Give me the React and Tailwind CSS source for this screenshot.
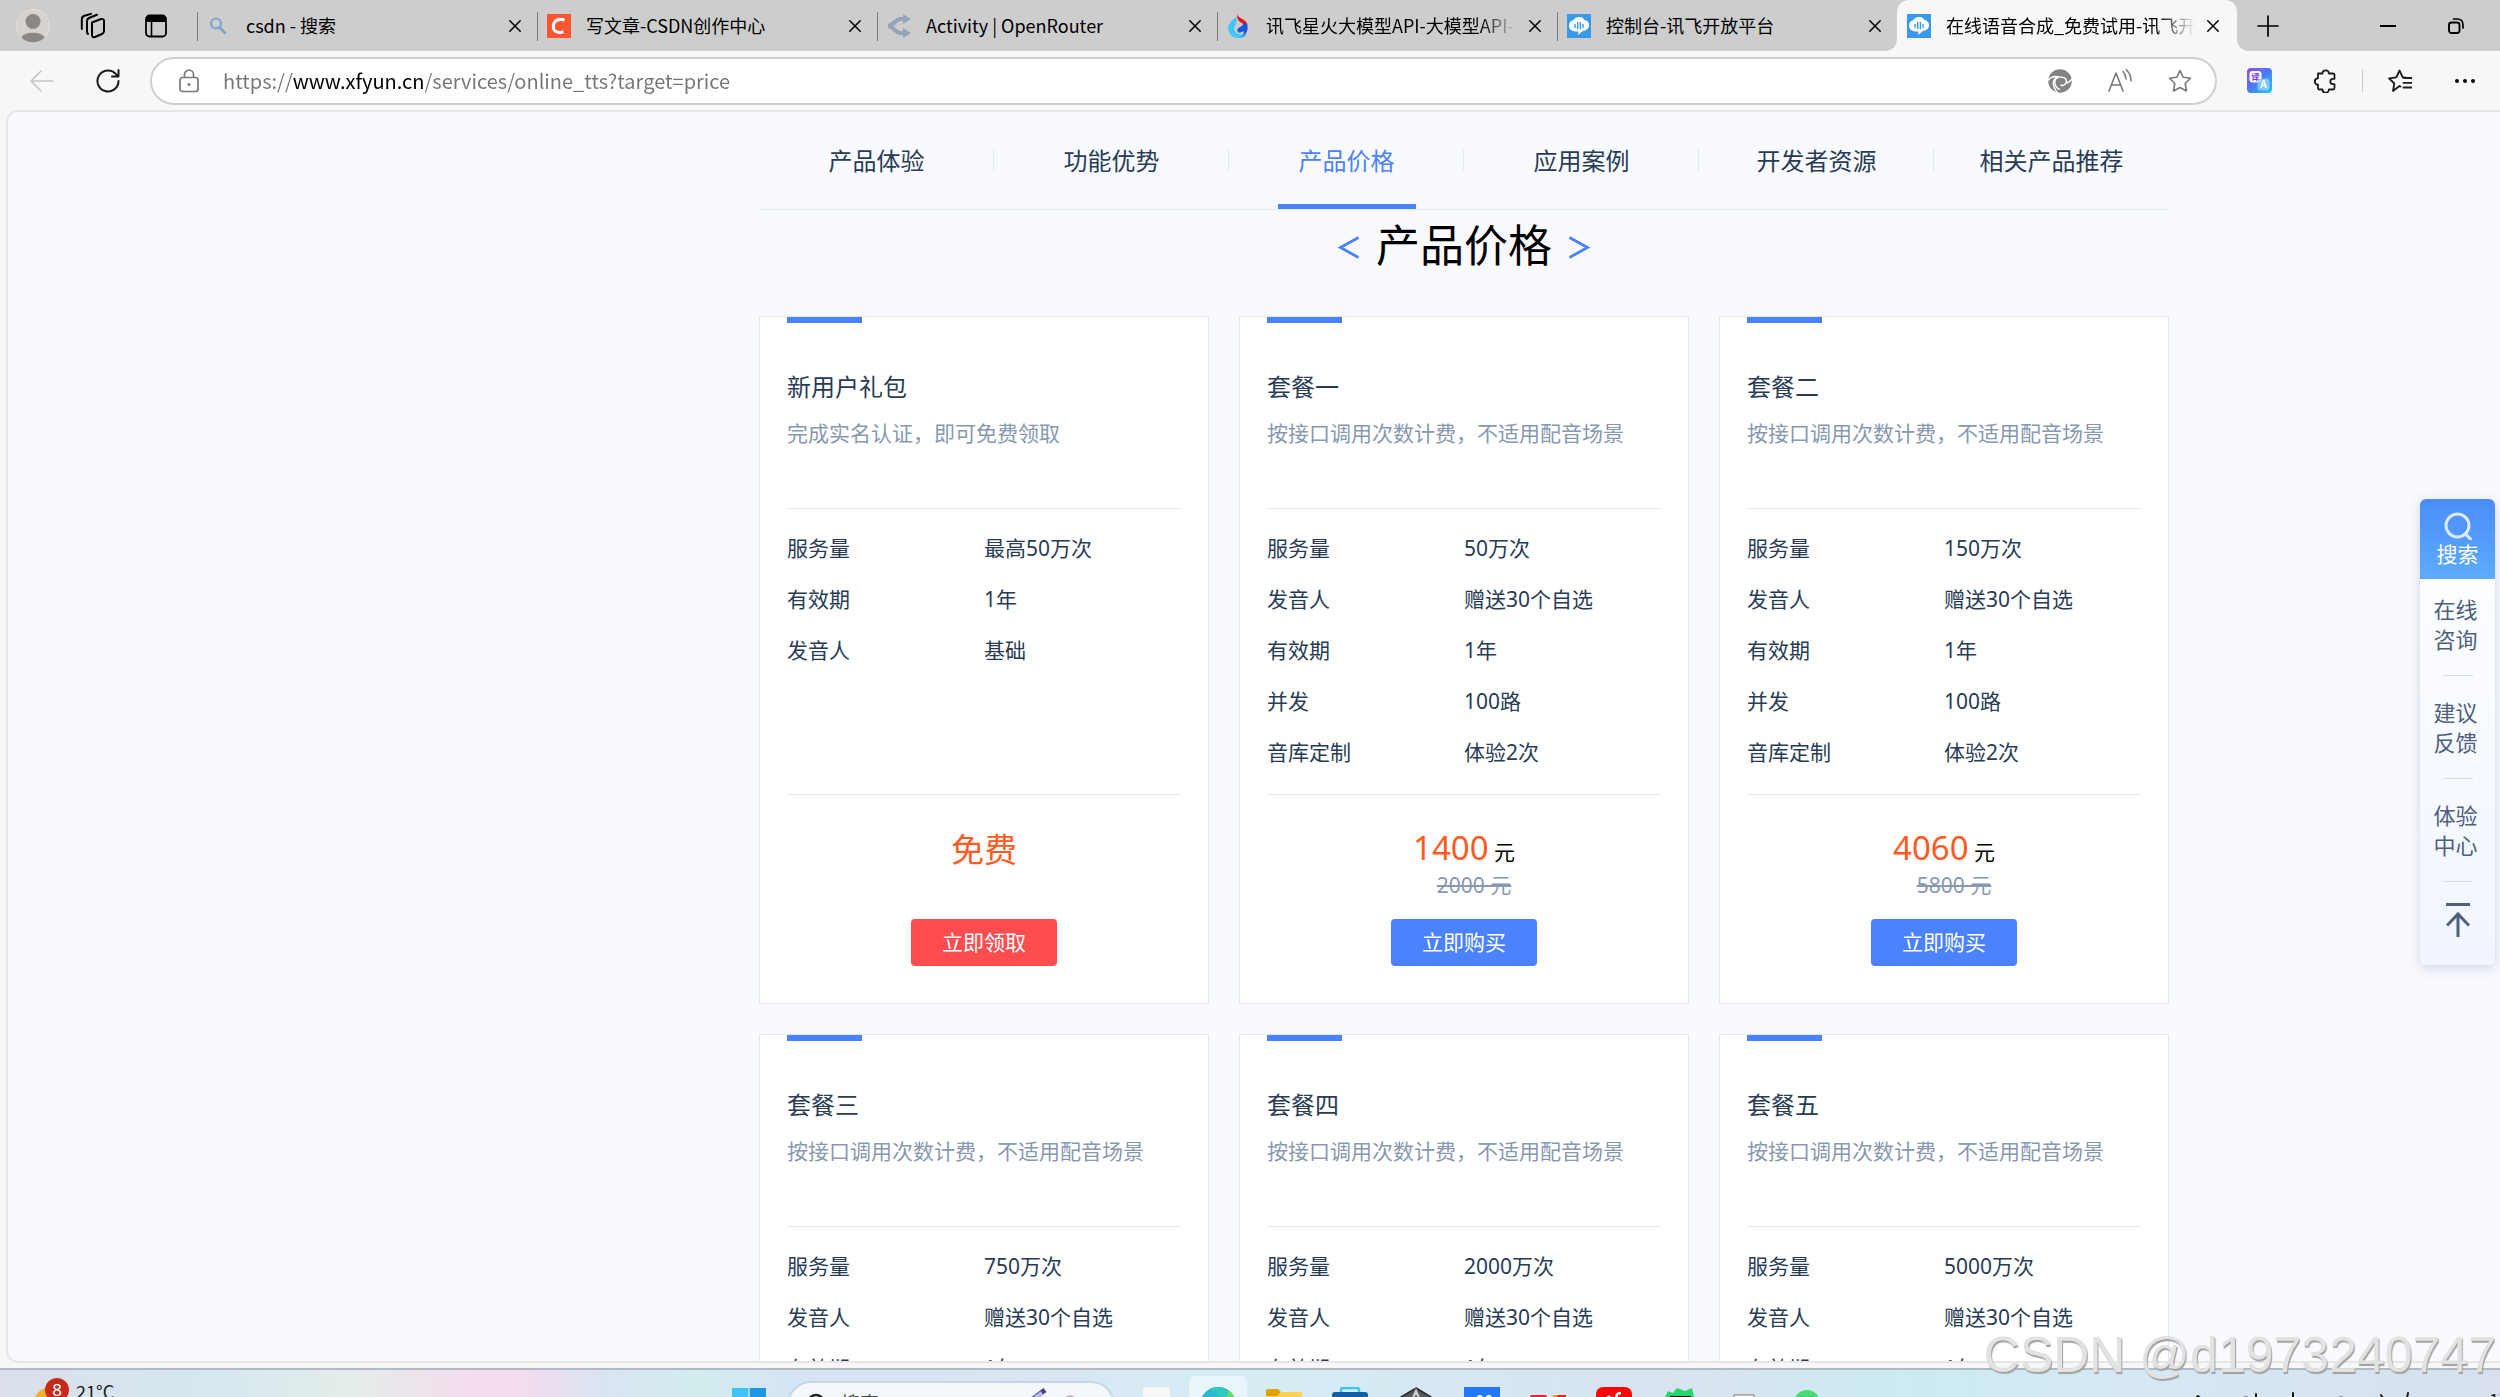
import React from "react";

const UI = "font-['Noto_Sans_CJK_SC',sans-serif]";

const s = (w) => ({ fill: "none", stroke: "currentColor", strokeWidth: w, strokeLinecap: "round", strokeLinejoin: "round" });

const SearchFav = () => (
  <svg className="size-6 text-[#7ba7cf]" viewBox="0 0 24 24"><circle cx="9" cy="9.500" r="5" {...s(2.2)} /><path d="M12.700 13.500 18 19" {...s(2.6)} /></svg>
);
const CsdnFav = () => (
  <svg className="size-6" viewBox="0 0 24 24"><rect width="24" height="24" fill="#fc5531" /><path d="M17.500 6.200C12 4 6.800 6.500 6.300 12c-.4 5 4 7.800 10.200 5.800" fill="none" stroke="#fff" strokeWidth="3" /></svg>
);
const RouterFav = () => (
  <svg className="size-6" viewBox="0 0 24 24"><path d="M0 12c5 0 7-6 12-7h6M0 12c5 0 7 6 12 7h6" transform="translate(1 0)" fill="none" stroke="#94a3b8" strokeWidth="4" /><path d="M16 0l8 5-8 5zM16 14l8 5-8 5z" fill="#94a3b8" /></svg>
);
const SparkFav = () => (
  <svg className="size-6" viewBox="0 0 24 24"><path d="M9 3C5 6 1 10 1 15a10 9.500 0 0 0 10 9c4 0 7-1 9-4-3 1-7 1-10-1-4-3-3-6-1-9 1-2 1-4 0-7z" fill="#43c6f7" /><path d="M10 0c1 5 11 5 10.500 12-2-2-6-2-9-5.500C10 4 10 2 10 0z" fill="#e8131b" /><path d="M20.500 12c1 7-4 11-9 12 3-1 6-3 5-7-1 1-3 2-5 1.500C9 16 11 14 13 13c2-1 3-1.500 3-4 2 0 4 1 4.500 3z" fill="#1a55dc" /></svg>
);
const XfFav = () => (
  <svg className="size-6" viewBox="0 0 24 24"><rect width="24" height="24" fill="#3898ec" /><path d="M12 3c3 0 4.500 1 5.500 3C20.500 6.500 22.500 9 22 12c-.5 3-3 4.500-6 5l-5 4 .500-3.500C7 18 2 16.500 2 12c0-3 1.500-5.500 4.500-6C7.500 4 9 3 12 3z" fill="#fff" /><path d="M8 10.500v3M10.700 8.500v6M13.400 8.500v6M16 10.500v3" {...s(1.4)} stroke="#3898ec" /></svg>
);

const tabs = [
  { t: "csdn - 搜索", I: SearchFav },
  { t: "写文章-CSDN创作中心", I: CsdnFav },
  { t: "Activity | OpenRouter", I: RouterFav },
  { t: "讯飞星火大模型API-大模型API-星火", I: SparkFav, fade: true },
  { t: "控制台-讯飞开放平台", I: XfFav },
  { t: "在线语音合成_免费试用-讯飞开放平台", I: XfFav, fade: true, active: true },
];

const Close = () => (
  <svg className="size-3" viewBox="0 0 12 12"><path d="M.8.8l10.400 10.400M11.200.8.8 11.200" {...s(1.5)} /></svg>
);

function Tab({ t, I, fade, active }) {
  return (
    <div className={"relative flex h-[51px] min-w-0 max-w-[340px] flex-1 items-center pl-[10px] " + (active ? "rounded-t-xl bg-[#f7f7f7] pr-[18px]" : "pr-4")}>
      {!active && <span className="absolute left-0 top-3 h-[29px] w-px bg-[#7c7c7c]" />}
      {active && <svg className="absolute bottom-0 -left-3 size-3" viewBox="0 0 12 12"><path d="M12 0v12H0C7 12 12 7 12 0z" fill="#f7f7f7" /></svg>}
      {active && <svg className="absolute bottom-0 -right-3 size-3" viewBox="0 0 12 12"><path d="M0 0v12h12C5 12 0 7 0 0z" fill="#f7f7f7" /></svg>}
      <I />
      <button className={"ml-[15px] mr-3 min-w-0 flex-1 overflow-hidden whitespace-nowrap pb-0.5 text-left text-[18px] leading-7 " + (fade ? "[mask-image:linear-gradient(90deg,#000_85%,transparent)]" : "")}>{t}</button>
      <button aria-label="关闭标签页"><Close /></button>
    </div>
  );
}

function TabStrip() {
  return (
    <header className="flex h-[51px] items-center bg-[#cdcdcd] text-black">
      <div className="flex w-[197px] shrink-0 items-center">
        <button aria-label="个人资料" className="ml-4">
          <svg className="size-[34px]" viewBox="0 0 34 34"><circle cx="17" cy="17" r="16.500" fill="#d6d3ce" stroke="#e2e0dc" /><circle cx="17" cy="12.500" r="7.500" fill="#8b8782" /><path d="M5.500 28.500C7 22 27 22 28.500 28.500 23 35 11 35 5.500 28.500z" fill="#8b8782" /></svg>
        </button>
        <button aria-label="工作区" className="ml-[30px]">
          <svg className="size-[26px]" viewBox="0 0 26 26"><path d="M12 9.500l9-3.500q3-.5 3 2v10q0 2-2 3l-7 3q-3 1-3-2zM7 19.500V8q0-2 2-3l8-3.200M1.800 16V6q0-2 2-3L11 .9M7 8v11q0 1 1 2" {...s(2)} /></svg>
        </button>
        <button aria-label="标签页操作菜单" className="ml-[38px]">
          <svg className="size-6" viewBox="0 0 24 24"><rect x="2" y="1.500" width="20" height="21" rx="3.500" {...s(1.8)} /><path d="M2 8V5q0-4 4-4h12q4 0 4 4v3z" fill="currentColor" /><path d="M7.500 8v14" {...s(1.6)} /></svg>
        </button>
      </div>
      {tabs.map((x) => <Tab key={x.t} {...x} />)}
      <button aria-label="新建标签页" className="ml-5">
        <svg className="size-[22px]" viewBox="0 0 22 22"><path d="M11 1v20M1 11h20" {...s(1.7)} /></svg>
      </button>
      <div className="ml-auto flex shrink-0 items-center gap-[52px] pr-9">
        <button aria-label="最小化"><svg className="size-4" viewBox="0 0 16 16"><path d="M0 8h16" stroke="currentColor" strokeWidth="2" /></svg></button>
        <button aria-label="还原"><svg className="size-4" viewBox="0 0 16 16"><rect x="1" y="4.500" width="10.500" height="10.500" rx="2.500" {...s(1.9)} /><path d="M5.500 1H9Q15 1 15 7v3" {...s(1.7)} /></svg></button>
      </div>
    </header>
  );
}

function Toolbar() {
  return (
    <div className="flex h-[59px] items-center bg-[#f7f7f7] text-[#1b1b1b]">
      <button aria-label="后退" className="ml-[30px] text-[#c6c6c6]"><svg className="size-6" viewBox="0 0 24 24"><path d="M23 12H1M11 2 1 12l10 10" {...s(1.7)} /></svg></button>
      <button aria-label="刷新" className="ml-[42px]"><svg className="size-6" viewBox="0 0 24 24"><path d="M22.500 12A10.500 10.500 0 1 1 20 5.200l2 2M22.500 1v6.500H16" {...s(2)} /></svg></button>
      <div className="ml-[30px] flex h-12 min-w-0 flex-1 items-center rounded-full border-2 border-[#cfcfcf] bg-white pr-[23px] pl-[25px] text-[#7a7a7a]">
        <svg className="size-6 shrink-0" viewBox="0 0 24 24"><rect x="3" y="8.500" width="18" height="14" rx="2.500" {...s(1.7)} /><path d="M7.500 8V5.500a4.500 4.500 0 0 1 9 0V8" {...s(1.7)} /><circle cx="12" cy="15.500" r="1.500" fill="currentColor" /></svg>
        <input aria-label="地址栏" defaultValue="https://www.xfyun.cn/services/online_tts?target=price" className="ml-[22px] min-w-0 flex-1 bg-[linear-gradient(90deg,#767676_0_69px,#000_69px_200px,#767676_200px)] bg-clip-text text-[20px] leading-8 text-transparent outline-none" />
        <div className="flex items-center gap-9">
          <button aria-label="同步"><svg className="size-6" viewBox="0 0 24 24"><circle cx="12" cy="12" r="11.800" fill="#838383" /><path d="M0 11.500c3-4 8-4.500 12-3M12 8c-4 0-6 3-5 7 1 3 3 5 5 5.500M8.500 8c-4 3-4 8-1.500 12 1 1.800 2 3 3 4M12.500 8.300c4-.8 7 2 5.500 5.700-.8 2-2.800 3-5.500 2M18 14c2 0 4-1.500 6-4" fill="none" stroke="#fff" strokeWidth="1.500" /></svg></button>
          <button aria-label="大声朗读"><svg className="size-6" viewBox="0 0 24 24"><path d="M1 22 8 4l7 18M3.500 16h9M15 2.500q3 3.500 3 7.500M18.500.8q4.500 5 4.500 11" {...s(1.6)} /></svg></button>
          <button aria-label="收藏"><svg className="size-6" viewBox="0 0 24 24"><path d="M12 1.500l3.200 6.800 7.300 1-5.300 5.200 1.300 7.500L12 18.500 5.500 22l1.300-7.500L1.500 9.300l7.300-1z" {...s(1.6)} /></svg></button>
        </div>
      </div>
      <div className="flex items-center pl-[30px] pr-[23px]">
        <button aria-label="翻译"><svg className="size-[25px]" viewBox="0 0 25 25"><defs><linearGradient id="tr" x1="0" y1="0" x2="1" y2="1"><stop offset="0" stopColor="#8a4cf5" /><stop offset=".5" stopColor="#4a7df5" /><stop offset="1" stopColor="#22c6fa" /></linearGradient></defs><rect width="25" height="25" rx="4" fill="url(#tr)" /><rect x="2.500" y="3" width="12" height="11.500" rx="3" fill="#fff" /><text x="8.500" y="12" textAnchor="middle" fontSize="8.500" fontWeight="700" fill="#7a2ff0">译</text><rect x="10.500" y="10.500" width="12" height="12" rx="3" fill="#8fd4fb" opacity=".8" /><text x="16.500" y="20" textAnchor="middle" fontSize="10" fontWeight="700" fill="#fff">A</text></svg></button>
        <button aria-label="扩展" className="ml-[41px]"><svg className="size-6" viewBox="0 0 24 24"><path d="M5 4.500h4.500a3.200 3.200 0 0 1 6.400 0H20q1.500 0 1.500 1.500v3.800h-1.500a2.700 2.700 0 0 0 0 5.400h1.500V19q0 1.500-1.500 1.500h-4.100a3.200 3.200 0 0 1-6.400 0H6.500Q5 20.500 5 19v-3.300a3.200 3.200 0 0 1 0-6.400z" {...s(1.8)} /></svg></button>
        <span className="mx-[25px] h-[23px] w-px bg-[#c8c8c8]" />
        <button aria-label="收藏夹"><svg className="size-6" viewBox="0 0 24 24"><path d="M12.500 17.500l-1-.5L5 22l1.300-7.500L1 9.300l7.300-1L11.500 1.500l3.200 6.800H17M16 9h7.500M15.500 13.800h8M15.500 18.500h8" {...s(1.8)} /></svg></button>
        <button aria-label="设置及其他" className="ml-[41px]"><svg className="size-6" viewBox="0 0 24 24"><circle cx="4" cy="12" r="2" /><circle cx="12" cy="12" r="2" /><circle cx="20" cy="12" r="2" /></svg></button>
      </div>
    </div>
  );
}

const nav = ["产品体验", "功能优势", "产品价格", "应用案例", "开发者资源", "相关产品推荐"];
const metered = "按接口调用次数计费，不适用配音场景";
const rows = (n) => [["服务量", n], ["发音人", "赠送30个自选"], ["有效期", "1年"]];
const more = [["并发", "100路"], ["音库定制", "体验2次"]];
const plans = [
  { name: "新用户礼包", desc: "完成实名认证，即可免费领取", rows: [["服务量", "最高50万次"], ["有效期", "1年"], ["发音人", "基础"]], price: "免费" },
  { name: "套餐一", desc: metered, rows: [...rows("50万次"), ...more], price: "1400", old: "2000" },
  { name: "套餐二", desc: metered, rows: [...rows("150万次"), ...more], price: "4060", old: "5800" },
  { name: "套餐三", desc: metered, rows: rows("750万次") },
  { name: "套餐四", desc: metered, rows: rows("2000万次") },
  { name: "套餐五", desc: metered, rows: rows("5000万次") },
];

function Plan({ p }) {
  return (
    <article className="flex min-h-[688px] flex-col border border-[#e4e7f0] bg-white px-[27px] text-[#283c55]">
      <div className="h-[6px] w-[75px] bg-[#4b82ff]" />
      <h3 className="mt-12 text-[24px] leading-8">{p.name}</h3>
      <p className="mt-4 text-[21px] leading-7 text-[#8798b0]">{p.desc}</p>
      <dl className="mt-[61px] h-[287px] border-y border-[#e4e7f0] pt-[14px] text-[21px] leading-[51px]">
        {p.rows.map(([k, v]) => (
          <div key={k} className="grid grid-cols-2"><dt>{k}</dt><dd>{v}</dd></div>
        ))}
      </dl>
      {p.price && (
        <>
          <div className="mt-8 h-[92px] text-center">
            {p.old ? (
              <>
                <p className="text-[21px] leading-[42px] text-black"><span className="text-[33px] text-[#ff5a1f]">{p.price}</span> 元</p>
                <p className="pl-5 text-[21px] leading-6 text-[#8798b0]"><s>{p.old} 元</s></p>
              </>
            ) : (
              <p className="text-[33px] leading-[46px] text-[#ff5a1f]">{p.price}</p>
            )}
          </div>
          <button className={"h-[47px] w-[146px] self-center rounded text-[21px] text-white " + (p.old ? "bg-[#4b82ff]" : "bg-[#ff4d4f]")}>{p.old ? "立即购买" : "立即领取"}</button>
        </>
      )}
    </article>
  );
}

function FloatBar() {
  return (
    <aside className="absolute top-[387px] right-[5px] w-[75px] overflow-hidden rounded-md bg-linear-to-b from-white to-[#f0f5ff] pb-7 text-[22px] leading-[30px] text-[#4f5f7c] shadow-[0_3px_12px_rgba(90,100,130,0.25)]">
      <button className="flex h-20 w-full flex-col items-center bg-linear-to-b from-[#4b8cf8] to-[#5dacff] pt-[13px] text-[21px] leading-7 text-white">
        <svg className="size-7 shrink-0" viewBox="0 0 28 28"><circle cx="13.500" cy="13.500" r="11.500" fill="none" stroke="#dbe9ff" strokeWidth="3" /><path d="M21.500 22l5 5" stroke="#dbe9ff" strokeWidth="3" strokeLinecap="round" /></svg>
        搜索
      </button>
      {["在线咨询", "建议反馈", "体验中心"].map((t, i) => (
        <button key={t} className={"flex w-full flex-col items-center " + (i ? "pt-[21px]" : "pt-[15px]")}>
          <span className="w-12 text-left">{t}</span>
          <span className="mt-[21px] h-px w-[30px] bg-[#d8dce2]" />
        </button>
      ))}
      <button aria-label="返回顶部" className="mt-[21px] flex w-full justify-center">
        <svg className="h-[34px] w-6" viewBox="0 0 24 34"><path d="M0 1.500h24" stroke="#4f5f7c" strokeWidth="3" /><path d="M12 34V11M1 22.500 12 11l11 11.500" fill="none" stroke="#4f5f7c" strokeWidth="3" /></svg>
      </button>
    </aside>
  );
}

function Page() {
  return (
    <main className="relative ml-[6px] min-h-0 flex-1 overflow-hidden rounded-l-xl border-2 border-r-0 border-[#e6e6e8] bg-[#f9faff] font-['Noto_Sans','Noto_Sans_CJK_SC',sans-serif]">
      <div className="pr-[331px] pl-[751px]">
        <nav className="grid grid-cols-6 border-b border-[#e4e7f0] text-[24px] text-[#283c55]">
          {nav.map((n, i) => (
            <div key={n} className="relative flex h-[97px] items-center justify-center">
              <a href={"#s" + i} className={n === "产品价格" ? "text-[#4b82ff]" : ""}>{n}</a>
              {i < 5 && <span className="absolute top-[37px] right-0 h-[22px] w-px bg-[#e4e7f0]" />}
              {n === "产品价格" && <span className="absolute bottom-0 h-[5px] w-[138px] bg-[#4b82ff]" />}
            </div>
          ))}
        </nav>
        <h2 className="flex h-[106px] items-start justify-center gap-4 pt-1.5 text-[44px] leading-[58px] text-black">
          <svg className="mt-5 h-[23px] w-[22px]" viewBox="0 0 22 23"><path d="M20.500 1.500 2.500 11.500l18 10" fill="none" stroke="#4b82ff" strokeWidth="2.800" /></svg>
          产品价格
          <svg className="mt-5 h-[23px] w-[22px]" viewBox="0 0 22 23"><path d="M1.500 1.500l18 10-18 10" fill="none" stroke="#4b82ff" strokeWidth="2.800" /></svg>
        </h2>
        <section className="grid grid-cols-3 gap-[30px]">
          {plans.map((p) => <Plan key={p.name} p={p} />)}
        </section>
      </div>
      <FloatBar />
    </main>
  );
}

const apps = [
  ["任务视图", <><rect x="0" y="10" width="26" height="22" fill="#9aa0a6" /><rect x="9" width="27" height="24" fill="#f6f6f6" /></>],
  ["Edge", <><circle cx="18" cy="18" r="18" fill="#29b7d3" /><path d="M18 0a18 18 0 0 1 18 16q-6 4-12-2T10 2q4-2 8-2z" fill="#30c9c0" /><path d="M28 3q7 5 8 13-5 1-9-3z" fill="#63dd62" /><path d="M2 13q9-6 17 0v23Q-2 30 2 13z" fill="#1273c4" /></>],
  ["文件资源管理器", <><path d="M0 4q0-2 2-2h10l4 4-4 5H0z" fill="#dfa008" /><path d="M0 9h11l4-4h19q2 0 2 2v23H0z" fill="#ffd04f" /></>],
  ["Microsoft Store", <><path d="M9 7V2.500Q9 1 11 1h14q2 0 2 1.500V7" fill="none" stroke="#35c6f4" strokeWidth="2.500" /><rect y="5" width="36" height="30" rx="3" fill="#0f5ea8" /></>],
  ["Unity Hub", <><path d="M18 1l15 9v16l-15 9-15-9V10z" fill="#55585c" stroke="#26282b" strokeWidth="1.500" /><path d="M18 1l-6 14 6-6 6 6z" fill="#c9ccd0" /><path d="M18 8l5 9H13z" fill="#1d1f22" /></>],
  ["飞书", <><rect width="36" height="36" fill="#2377fb" /><path d="M13 14c0-6 5-6 5-2v5M22 14c0-6 5-6 5-2v5" fill="none" stroke="#fff" strokeWidth="2.500" /></>],
  ["会议", <><rect y="8" width="17" height="24" rx="2" fill="#ef2020" /><path d="M20 15l3-6q1-1 2-1h11v24H20z" fill="#d92424" /><path d="M20 15l4-7h4l-5 8z" fill="#f59a1b" /></>],
  ["网易云音乐", <><rect width="36" height="36" rx="7" fill="#fb0505" /><path d="M25 6q-6 0-4 6t-3 6-1-8M14 9q-6 3-6 9" fill="none" stroke="#fff" strokeWidth="2.500" /></>],
  ["PyCharm", <><path d="M2 12l4-8 5 2 4-5 8 3 7-3 2 9 2 20H6z" fill="#27d66b" /><path d="M8 9h21v24H8z" fill="#0b1612" /><path d="M12 15q3-4 6 0M20 15q3-4 6 0" fill="none" stroke="#8ff0a8" strokeWidth="2" /></>],
  ["Typora", <><path d="M6 8h20v4H6z" fill="#fff" stroke="#777" /><path d="M14 12h4v20h-4z" fill="#bbb" stroke="#777" /></>],
  ["微信", <><circle cx="13" cy="16" r="13" fill="#43dd72" /><circle cx="8" cy="11" r="1.600" fill="#167a38" /><circle cx="18" cy="11" r="1.600" fill="#167a38" /></>],
];

function Taskbar() {
  return (
    <footer className="mt-[5px] h-[29px] shrink-0 overflow-hidden border-t-2 border-[#b1bac2] bg-[linear-gradient(90deg,#dadfea_0%,#d5e7f0_8%,#e4edea_14%,#f5dced_19%,#f3dcee_21%,#dae4f2_24%,#d2edee_28%,#d6e4f6_32%,#dae5f3_40%,#d5edf4_49%,#d6e7f1_60%,#d9e3ef_68%,#cbecf1_76%,#d6e8f3_85%,#d8e0ee_100%)] text-[#1b1b1b]">
      <div className="flex h-[70px] items-center">
        <button className="flex w-[716px] shrink-0 items-start gap-[7px] pl-[33px] text-[18px] leading-6">
          <svg className="h-14 w-9" viewBox="0 0 36 56"><circle cx="18" cy="28" r="18" fill="#f0b02c" /><circle cx="24" cy="13" r="12" fill="#c42b1c" /><text x="24" y="19" textAnchor="middle" fontSize="17" fill="#fff" fontFamily="Noto Sans">8</text></svg>
          <span className="mt-0.5">21°C</span>
        </button>
        <button aria-label="开始" className="ml-4"><svg className="size-[34px]" viewBox="0 0 34 34"><path d="M0 0h16.300v16.300H0zM0 17.700h16.300V34H0z" fill="#3fc2f7" /><path d="M17.700 0H34v16.300H17.700zM17.700 17.700H34V34H17.700z" fill="#1d98e8" /></svg></button>
        <label className="mr-1 ml-[21px] flex h-12 w-[328px] items-center rounded-full border-2 border-[#c5d5e4] bg-[#f3f8fd] pr-3 pl-4">
          <svg className="size-6" viewBox="0 0 24 24"><circle cx="11" cy="10" r="8" {...s(2.4)} /><path d="M5 17l-4 5" {...s(2.4)} /></svg>
          <input aria-label="搜索" placeholder="搜索" className="ml-3 w-[184px] bg-transparent pb-1 text-[19px] leading-7 outline-none placeholder:text-[#444]" />
          <svg className="h-9 w-[60px]" viewBox="0 0 60 36"><path d="M4 15 20 3" stroke="#4a4580" strokeWidth="5" /><path d="M10 11l7-5" stroke="#b9b8f5" strokeWidth="4" /><path d="M37 11l8-3 14 5-6 20H37z" fill="#c5a8d8" /></svg>
        </label>
        {apps.map(([name, art], i) => (
          <button key={name} aria-label={name} className={"mx-1 flex h-[58px] w-[58px] items-center justify-center rounded-md " + (i === 1 ? "bg-[#eaf5fb]" : "")}>
            <svg className="size-9" viewBox="0 0 36 36">{art}</svg>
          </button>
        ))}
        <div className="ml-auto flex items-start gap-[68px]">
          <svg className="h-9 w-[230px]" viewBox="0 0 230 36"><path d="M2 14l5-5 5 5M45 17a11 11 0 0 1 20 0V7M102 6v24M92 12h20M142 15q8-9 16 0M182 13l5 8M190 8l5 8M211 11h17M217 6l-5 24" {...s(2)} /></svg>
          <span className="w-[11px] overflow-hidden whitespace-nowrap text-[18px] leading-6">17</span>
        </div>
      </div>
    </footer>
  );
}

export default function App() {
  return (
    <div className={"relative flex h-screen flex-col overflow-hidden bg-[#f7f7f7] " + UI}>
      <TabStrip />
      <Toolbar />
      <Page />
      <Taskbar />
      <p className="pointer-events-none absolute right-1 bottom-1.5 font-['Liberation_Sans',sans-serif] text-[50px] leading-[72px] whitespace-nowrap text-[#e2e2e2] [text-shadow:1px_2px_1px_#a0a0a0]">CSDN @d1973240747</p>
    </div>
  );
}
